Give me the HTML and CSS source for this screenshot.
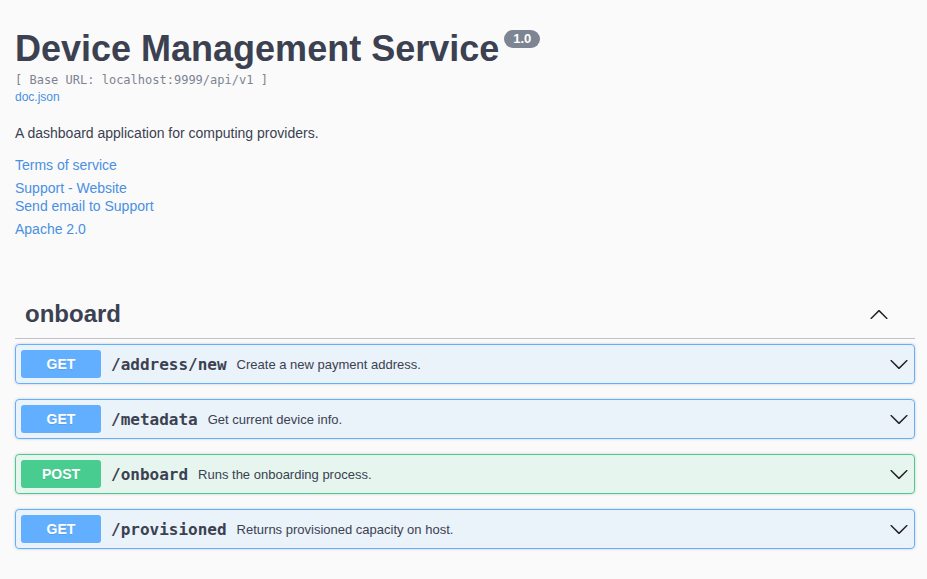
FILE: index.html
```html
<!DOCTYPE html>
<html>
<head>
<meta charset="utf-8">
<link rel="stylesheet" href="styles.css">
</head>
<body>
<div class="wrapper">
  <section class="info">
    <div class="title-row">
      <h2 class="title">Device Management Service</h2>
      <span class="version">1.0</span>
    </div>
    <div class="base-url">[ Base URL: localhost:9999/api/v1 ]</div>
    <a class="link small" href="#">doc.json</a>
    <p class="description">A dashboard application for computing providers.</p>
    <div class="links">
      <a class="link" href="#">Terms of service</a>
      <div class="contact">
        <a class="link" href="#">Support - Website</a>
        <a class="link" href="#">Send email to Support</a>
      </div>
      <a class="link" href="#">Apache 2.0</a>
    </div>
  </section>

  <section class="tag-section">
    <div class="tag">
      <h3 class="tag-name">onboard</h3>
      <svg class="arrow up" viewBox="0 0 20 20" width="20" height="20"><path d="M17.418 14.908c.272.268.709.268.979 0s.271-.701 0-.969l-7.908-7.83c-.27-.268-.707-.268-.979 0l-7.908 7.83c-.27.268-.27.701 0 .969.271.268.709.268.979 0L10 7.767l7.418 7.141z"/></svg>
    </div>

    <div class="opblock get">
      <div class="summary">
        <span class="method">GET</span>
        <span class="path">/address/new</span>
        <span class="desc">Create a new payment address.</span>
        <svg class="arrow" viewBox="0 0 20 20" width="20" height="20"><path d="M17.418 6.109c.272-.268.709-.268.979 0s.271.701 0 .969l-7.908 7.83c-.27.268-.707.268-.979 0l-7.908-7.83c-.27-.268-.27-.701 0-.969.271-.268.709-.268.979 0L10 13.25l7.418-7.141z"/></svg>
      </div>
    </div>

    <div class="opblock get">
      <div class="summary">
        <span class="method">GET</span>
        <span class="path">/metadata</span>
        <span class="desc">Get current device info.</span>
        <svg class="arrow" viewBox="0 0 20 20" width="20" height="20"><path d="M17.418 6.109c.272-.268.709-.268.979 0s.271.701 0 .969l-7.908 7.83c-.27.268-.707.268-.979 0l-7.908-7.83c-.27-.268-.27-.701 0-.969.271-.268.709-.268.979 0L10 13.25l7.418-7.141z"/></svg>
      </div>
    </div>

    <div class="opblock post">
      <div class="summary">
        <span class="method">POST</span>
        <span class="path">/onboard</span>
        <span class="desc">Runs the onboarding process.</span>
        <svg class="arrow" viewBox="0 0 20 20" width="20" height="20"><path d="M17.418 6.109c.272-.268.709-.268.979 0s.271.701 0 .969l-7.908 7.83c-.27.268-.707.268-.979 0l-7.908-7.83c-.27-.268-.27-.701 0-.969.271-.268.709-.268.979 0L10 13.25l7.418-7.141z"/></svg>
      </div>
    </div>

    <div class="opblock get">
      <div class="summary">
        <span class="method">GET</span>
        <span class="path">/provisioned</span>
        <span class="desc">Returns provisioned capacity on host.</span>
        <svg class="arrow" viewBox="0 0 20 20" width="20" height="20"><path d="M17.418 6.109c.272-.268.709-.268.979 0s.271.701 0 .969l-7.908 7.83c-.27.268-.707.268-.979 0l-7.908-7.83c-.27-.268-.27-.701 0-.969.271-.268.709-.268.979 0L10 13.25l7.418-7.141z"/></svg>
      </div>
    </div>
  </section>
</div>
</body>
</html>
```

FILE: styles.css
```css
html, body {
  margin: 0;
  padding: 0;
  background: #fafafa;
}
body {
  font-family: "Liberation Sans", Arial, sans-serif;
  color: #3b4151;
}
.wrapper {
  padding: 0 12px 0 15px;
}
.info {
  padding-top: 28px;
}
.title-row {
  display: flex;
  align-items: flex-start;
}
.title {
  margin: 0;
  font-size: 36px;
  font-weight: 700;
  line-height: 42px;
  color: #3b4151;
}
.version {
  margin: 2px 0 0 5px;
  background: #7d8492;
  color: #fff;
  font-size: 13px;
  font-weight: 700;
  line-height: 16px;
  padding: 1px 9px;
  border-radius: 10px;
}
.base-url {
  font-family: "DejaVu Sans Mono", monospace;
  font-size: 12px;
  color: #7d8492;
  line-height: 15px;
  margin-top: 3px;
}
.link {
  display: block;
  color: #4990e2;
  text-decoration: none;
  font-size: 14px;
  line-height: 18px;
}
.link.small {
  font-size: 12px;
  line-height: 15px;
  margin-top: 2px;
}
.description {
  font-size: 14px;
  line-height: 18px;
  margin: 19px 0 14px;
}
.links {
  display: flex;
  flex-direction: column;
  gap: 5px;
}
.tag-section {
  margin-top: 52px;
}
.tag {
  display: flex;
  align-items: center;
  padding: 10px 26px 10px 10px;
  border-bottom: 1px solid rgba(59, 65, 81, 0.3);
  margin-bottom: 5px;
}
.tag-name {
  flex: 1;
  margin: 0;
  font-size: 24px;
  font-weight: 700;
  line-height: 28px;
}
.arrow {
  fill: #222;
  flex: none;
}
.opblock {
  border: 1px solid;
  border-radius: 4px;
  margin-bottom: 15px;
  box-shadow: 0 0 3px rgba(0, 0, 0, 0.19);
}
.opblock.get {
  background: rgba(97, 175, 254, 0.1);
  border-color: #61affe;
}
.opblock.post {
  background: rgba(73, 204, 144, 0.1);
  border-color: #49cc90;
}
.summary {
  display: flex;
  align-items: center;
  padding: 5px;
}
.method {
  min-width: 80px;
  box-sizing: border-box;
  padding: 6px 15px;
  text-align: center;
  border-radius: 3px;
  color: #fff;
  font-size: 14px;
  font-weight: 700;
  line-height: 16px;
  text-shadow: 0 1px 0 rgba(0, 0, 0, 0.1);
}
.get .method { background: #61affe; }
.post .method { background: #49cc90; }
.path {
  font-family: "DejaVu Sans Mono", monospace;
  font-size: 16px;
  font-weight: 600;
  padding: 0 10px;
  color: #3b4151;
}
.desc {
  flex: 1;
  font-size: 13px;
  color: #3b4151;
}
```
